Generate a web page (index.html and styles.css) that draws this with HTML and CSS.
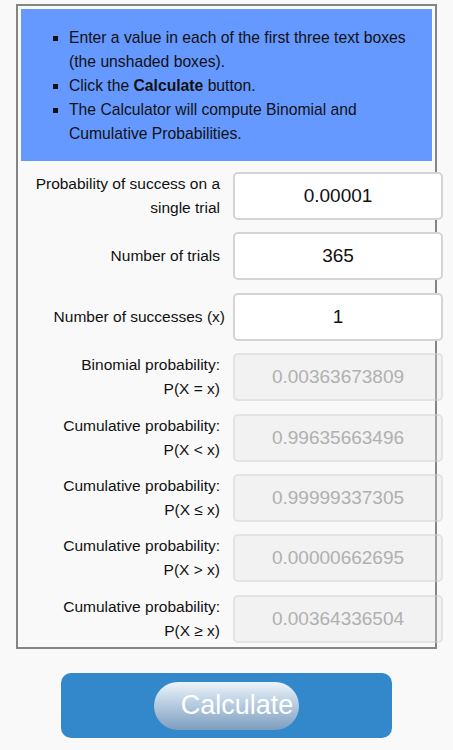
FILE: index.html
```html
<!DOCTYPE html>
<html lang="en">

<head>
    <meta charset="UTF-8">
    <title>Binomial Probability Calculator</title>
    <link rel="stylesheet" href="styles.css">
</head>

<body>
    <form id="calcForm">
        <div class="calc-box">
            <div class="instructions">
                <ul>
                    <li>Enter a value in each of the first three text boxes (the unshaded boxes).</li>
                    <li>Click the <b>Calculate</b> button.</li>
                    <li>The Calculator will compute Binomial and Cumulative Probabilities.</li>
                </ul>
            </div>

            <div class="row">
                <label for="prob">Probability of success on a single trial</label>
                <input type="text" id="prob" value="0.00001">
            </div>
            <div class="row">
                <label for="trials">Number of trials</label>
                <input type="text" id="trials" value="365">
            </div>
            <div class="row">
                <label for="successes" class="label-wide">Number of successes (x)</label>
                <input type="text" id="successes" value="1">
            </div>
            <div class="row">
                <label for="pEq">Binomial probability:<br>P(X = x)</label>
                <input type="text" id="pEq" value="0.00363673809" readonly>
            </div>
            <div class="row">
                <label for="pLt">Cumulative probability:<br>P(X &lt; x)</label>
                <input type="text" id="pLt" value="0.99635663496" readonly>
            </div>
            <div class="row">
                <label for="pLe">Cumulative probability:<br>P(X &le; x)</label>
                <input type="text" id="pLe" value="0.99999337305" readonly>
            </div>
            <div class="row">
                <label for="pGt">Cumulative probability:<br>P(X &gt; x)</label>
                <input type="text" id="pGt" value="0.00000662695" readonly>
            </div>
            <div class="row">
                <label for="pGe">Cumulative probability:<br>P(X &ge; x)</label>
                <input type="text" id="pGe" value="0.00364336504" readonly>
            </div>
        </div>

        <div class="button-bar">
            <button type="submit">Calculate</button>
        </div>
    </form>
</body>

</html>
```

FILE: styles.css
```css
body {
    font-family: "Liberation Sans", Arial, Helvetica, sans-serif;
    margin: 0;
    background-color: #f9f9f9;
    color: #111;
}

form {
    padding: 4px 16px 0;
}

.calc-box {
    border: 2px solid #858585;
    padding: 3px 3px 4px;
}

.instructions {
    background-color: #6699ff;
    font-size: 15.7px;
    line-height: 24px;
}

.instructions ul {
    margin: 0;
    padding: 17px 12px 15px 48px;
    list-style: square;
}

.row {
    display: flex;
    align-items: center;
    margin-top: 12.4px;
    margin-right: -11px;
}

.instructions + .row {
    margin-top: 11px;
}

label {
    flex: none;
    width: 199px;
    padding-right: 13px;
    text-align: right;
    font-size: 15.5px;
    line-height: 24px;
}

.label-wide {
    width: 204px;
    padding-right: 8px;
}

input[type="text"] {
    flex: none;
    width: 210px;
    height: 48px;
    box-sizing: border-box;
    margin: 0;
    border: 2px solid #d4d4d4;
    border-radius: 5px;
    background-color: #fff;
    font-family: inherit;
    font-size: 19px;
    text-align: center;
    color: #111;
    outline: none;
}

input[readonly] {
    border-color: rgba(205, 205, 205, 0.4);
    background-color: rgba(225, 225, 225, 0.3);
    color: #b0b0b0;
}

.button-bar {
    width: 331px;
    margin: 24px auto 0;
    padding: 9px 0 8px;
    background-color: #3388cc;
    border-radius: 10px;
    text-align: center;
}

button {
    height: 48px;
    padding: 0 6px 0 27px;
    border: none;
    border-radius: 24px;
    background: linear-gradient(#eef4fa, #b8cde2 45%, #7e9ebf);
    font-family: inherit;
    font-size: 27px;
    color: #fff;
    cursor: pointer;
}
```
